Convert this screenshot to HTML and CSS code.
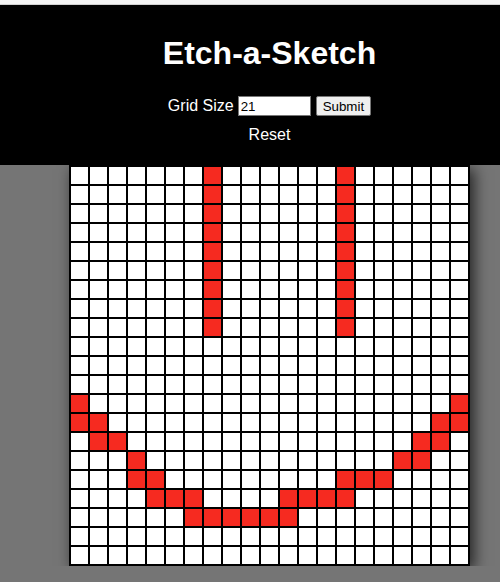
FILE: index.html
```html
<!DOCTYPE html>
<html lang="en">
<head>
<meta charset="utf-8">
<title>Etch-a-Sketch</title>
<link rel="stylesheet" href="styles.css">
</head>
<body class="page">
  <div class="topbar"></div>
  <header class="header">
    <h1 class="title">Etch-a-Sketch</h1>
    <form class="controls" onsubmit="return false;">
      <label class="label" for="size">Grid Size</label>
      <input class="size-input" id="size" type="text" value="21">
      <button class="submit" type="submit">Submit</button>
    </form>
    <div class="reset">Reset</div>
  </header>
  <main class="main">
    <div class="grid" id="grid"></div>
  </main>
  <script src="script.js"></script>
</body>
</html>
```

FILE: styles.css
```css
html {
  background: #757575;
}
.page {
  margin: 0;
  font-family: "Liberation Sans", Arial, sans-serif;
  background: #757575;
}
.topbar {
  height: 4px;
  background: #f4f4f4;
  border-bottom: 1px solid #d2d2d2;
}
.header {
  box-sizing: border-box;
  height: 160px;
  padding: 30px 0 0 39px;
  background: #000;
  color: #fff;
  text-align: center;
  position: relative;
  z-index: 1;
}
.title {
  margin: 0;
  font-size: 32px;
  line-height: 37px;
  font-weight: bold;
}
.controls {
  margin: 24px 0 0 0;
  height: 20px;
  display: flex;
  justify-content: center;
  align-items: center;
  gap: 5px;
}
.label {
  font-size: 16px;
  line-height: 18px;
  margin-right: -1px;
}
.size-input {
  box-sizing: border-box;
  width: 73px;
  height: 20px;
  margin: 0;
  padding: 1px 2px;
  border: 1px solid #767676;
  font-family: "Liberation Sans", Arial, sans-serif;
  font-size: 13.33px;
  color: #000;
  background: #fff;
}
.submit {
  box-sizing: border-box;
  height: 20px;
  margin: 0;
  padding: 0 6px;
  border: 1px solid #767676;
  border-radius: 2px;
  background: #efefef;
  color: #000;
  font-family: "Liberation Sans", Arial, sans-serif;
  font-size: 13.33px;
}
.reset {
  margin-top: 10px;
  font-size: 16px;
  line-height: 18px;
}
.main {
  padding-left: 39px;
}
.grid {
  width: max-content;
  margin: 0 auto;
  display: grid;
  grid-template-columns: repeat(21, 17px);
  grid-auto-rows: 17px;
  gap: 2px;
  padding: 2px;
  background: #000;
  box-shadow: 4px 4px 14px rgba(0, 0, 0, 0.7);
}
.cell {
  background: #fff;
}
.cell.on {
  background: #f62a20;
}
```

FILE: script.js
```js
var red = {
  0: [7, 14], 1: [7, 14], 2: [7, 14], 3: [7, 14], 4: [7, 14],
  5: [7, 14], 6: [7, 14], 7: [7, 14], 8: [7, 14],
  12: [0, 20],
  13: [0, 1, 19, 20],
  14: [1, 2, 18, 19],
  15: [3, 17, 18],
  16: [3, 4, 14, 15, 16],
  17: [4, 5, 6, 11, 12, 13, 14],
  18: [6, 7, 8, 9, 10, 11]
};
var grid = document.getElementById('grid');
for (var r = 0; r < 21; r++) {
  for (var c = 0; c < 21; c++) {
    var d = document.createElement('div');
    d.className = 'cell';
    if (red[r] && red[r].indexOf(c) !== -1) d.className += ' on';
    grid.appendChild(d);
  }
}
```
